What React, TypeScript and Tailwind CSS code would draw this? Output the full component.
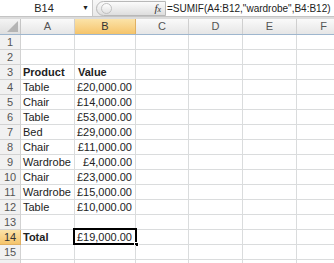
import React from 'react';

const cols = ['A', 'B', 'C', 'D', 'E', 'F'];
const colW = ['w-[54px]', 'w-[61px]', 'w-[53px]', 'w-[54px]', 'w-[54px]', 'w-[54px]'];

type Row = { a?: string; b?: string; bold?: boolean };

const rows: Row[] = [
  {},
  {},
  { a: 'Product', b: 'Value', bold: true },
  { a: 'Table', b: '£20,000.00' },
  { a: 'Chair', b: '£14,000.00' },
  { a: 'Table', b: '£53,000.00' },
  { a: 'Bed', b: '£29,000.00' },
  { a: 'Chair', b: '£11,000.00' },
  { a: 'Wardrobe', b: '£4,000.00' },
  { a: 'Chair', b: '£23,000.00' },
  { a: 'Wardrobe', b: '£15,000.00' },
  { a: 'Table', b: '£10,000.00' },
  {},
  { a: 'Total', b: '£19,000.00', bold: true },
  {},
  {},
];

export default function App() {
  return (
    <div className="w-[334px] h-[263px] overflow-hidden bg-white text-[11px] text-[#222] font-['Liberation_Sans',sans-serif]">
      {/* Formula bar */}
      <div className="flex h-[17px] items-center bg-gradient-to-b from-[#f7f7f7] to-[#e9e9e9] border-b border-[#c4c4c4]">
        <div className="flex h-full w-[93px] shrink-0 items-center bg-white border-r border-[#c8c8c8]">
          <span className="flex-1 text-center pl-[6px] text-[11px]">B14</span>
          <span className="w-[10px] text-[7px] text-[#222]">▼</span>
        </div>
        <div className="flex h-[15px] w-[70px] shrink-0 ml-[3px] items-center rounded-l-full rounded-r-[3px] border border-[#b8b8b8] bg-gradient-to-b from-[#fbfbfb] to-[#dedede]">
          <div className="ml-[4px] h-[11px] w-[11px] rounded-full border border-[#c0c0c0] bg-gradient-to-b from-white to-[#e2e2e2]" />
          <span className="ml-auto mr-[4px] text-[11px] italic font-['Liberation_Serif',serif] text-[#333]">
            f<span className="text-[8px]">x</span>
          </span>
        </div>
        <div className="flex h-full flex-1 min-w-0 overflow-hidden items-center bg-white pl-[1px] text-[10px] whitespace-nowrap">
          =SUMIF(A4:B12,"wardrobe",B4:B12)
        </div>
      </div>
      <div className="h-[2px] bg-[#dcdcdc]" />

      {/* Column headers */}
      <div className="flex h-[16px] border-b border-[#9eb6ce]">
        <div className="relative w-[21px] shrink-0 bg-gradient-to-b from-[#f4f4f4] to-[#dedede] border-r border-[#c5c5c5]">
          <svg className="absolute bottom-[2px] right-[2px]" width="11" height="11" viewBox="0 0 11 11">
            <polygon points="11,0 11,11 0,11" fill="#b4b4b4" />
          </svg>
        </div>
        {cols.map((c, i) => (
          <div
            key={c}
            className={`${colW[i]} shrink-0 flex items-center justify-center border-r text-[11px] ${
              c === 'B'
                ? 'bg-gradient-to-b from-[#fbe3a8] to-[#f5c46a] border-[#e0b062] text-[#333]'
                : 'bg-gradient-to-b from-[#fafafa] to-[#e6e6e6] border-[#cfcfcf] text-[#555]'
            }`}
          >
            {c}
          </div>
        ))}
      </div>

      {/* Rows */}
      {rows.map((r, i) => {
        const n = i + 1;
        const sel = n === 14;
        return (
          <div key={n} className="flex h-[15px]">
            <div
              className={`w-[21px] shrink-0 flex items-center justify-center border-r border-b text-[11px] ${
                sel
                  ? 'bg-gradient-to-b from-[#fbe3a8] to-[#f5c46a] border-[#e0b062] text-[#333]'
                  : 'bg-[#f1f1f1] border-[#d2d2d2] text-[#555]'
              }`}
            >
              {n <= 15 ? n : ''}
            </div>
            <div className={`${colW[0]} shrink-0 flex items-center pl-[2px] border-r border-b border-[#dadcdd] whitespace-nowrap ${r.bold ? 'font-bold' : ''}`}>
              {r.a}
            </div>
            <div
              className={`${colW[1]} shrink-0 relative flex items-center border-r border-b border-[#dadcdd] whitespace-nowrap ${
                r.bold && n === 3 ? 'justify-start pl-[3px] font-bold' : 'justify-end pr-[3px]'
              }`}
            >
              {sel && (
                <div className="absolute left-[-2px] top-[-2px] right-[-2px] bottom-[-1px] border-2 border-black">
                  <div className="absolute right-[-4px] bottom-[-4px] h-[5px] w-[5px] bg-black border border-white" />
                </div>
              )}
              <span className="relative">{r.b}</span>
            </div>
            {colW.slice(2).map((w, j) => (
              <div key={j} className={`${w} shrink-0 border-r border-b border-[#dadcdd]`} />
            ))}
          </div>
        );
      })}
    </div>
  );
}
